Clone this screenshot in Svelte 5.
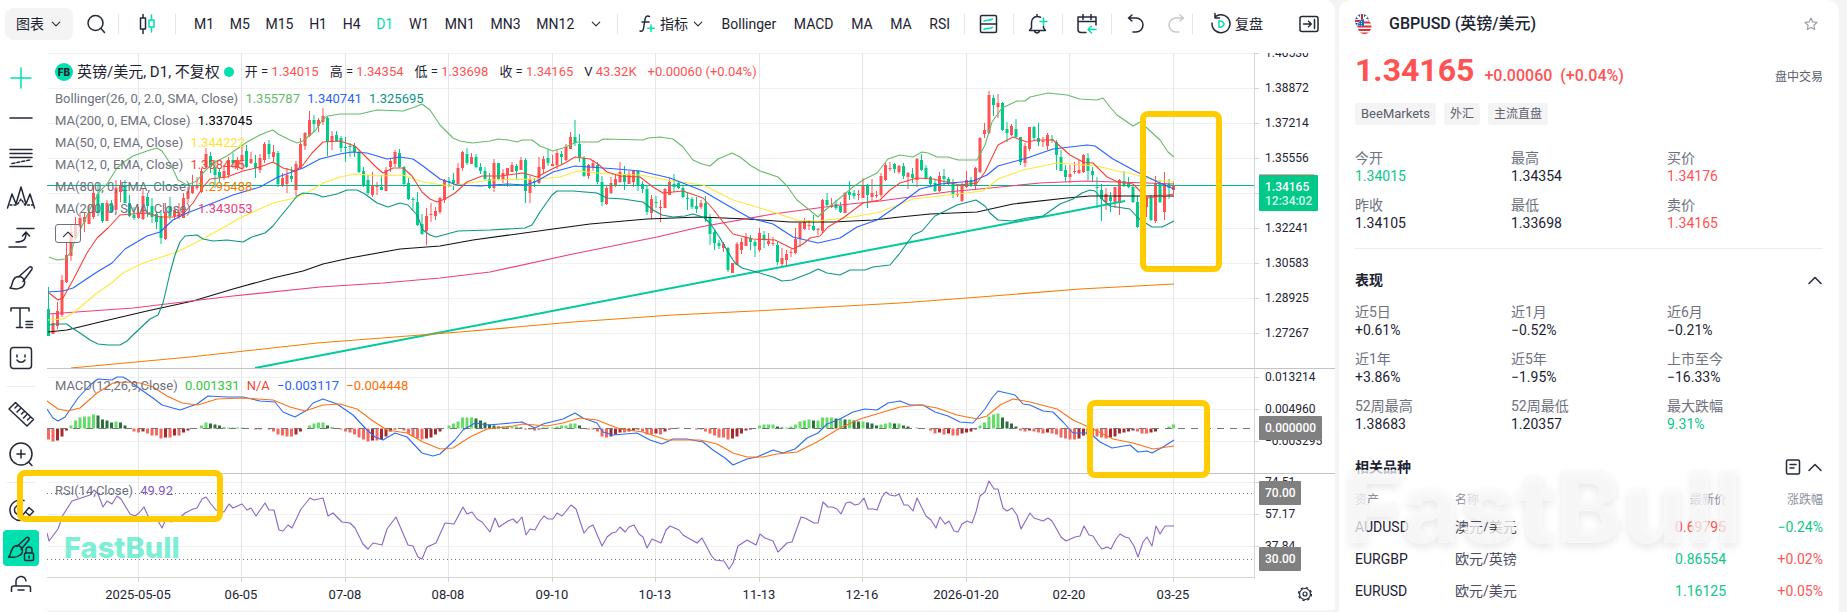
<script lang="ts">
  const intervals = ["M1", "M5", "M15", "H1", "H4", "D1", "W1", "MN1", "MN3", "MN12"];
  const studies = ["Bollinger", "MACD", "MA", "MA", "RSI"];

  const ohlc = [
    ["开", "1.34015"],
    ["高", "1.34354"],
    ["低", "1.33698"],
    ["收", "1.34165"]
  ];

  const legend = [
    { name: "MA(200, 0, EMA, Close)", value: "1.337045", tone: "black" },
    { name: "MA(50, 0, EMA, Close)", value: "1.344222", tone: "yellow" },
    { name: "MA(12, 0, EMA, Close)", value: "1.338445", tone: "red" },
    { name: "MA(800, 0, EMA, Close)", value: "1.295488", tone: "orange" },
    { name: "MA(200, 0, SMA, Close)", value: "1.343053", tone: "pink" }
  ];

  const quotes = [
    ["今开", "1.34015", "up"],
    ["最高", "1.34354", ""],
    ["买价", "1.34176", "down"],
    ["昨收", "1.34105", ""],
    ["最低", "1.33698", ""],
    ["卖价", "1.34165", "down"]
  ];

  const performance = [
    ["近5日", "+0.61%", ""],
    ["近1月", "−0.52%", ""],
    ["近6月", "−0.21%", ""],
    ["近1年", "+3.86%", ""],
    ["近5年", "−1.95%", ""],
    ["上市至今", "−16.33%", ""],
    ["52周最高", "1.38683", ""],
    ["52周最低", "1.20357", ""],
    ["最大跌幅", "9.31%", "up"]
  ];

  const related = [
    { code: "AUDUSD", name: "澳元/美元", price: "0.69795", priceTone: "down", change: "−0.24%", changeTone: "up" },
    { code: "EURGBP", name: "欧元/英镑", price: "0.86554", priceTone: "up", change: "+0.02%", changeTone: "down" },
    { code: "EURUSD", name: "欧元/美元", price: "1.16125", priceTone: "up", change: "+0.05%", changeTone: "down" }
  ];

  const xLabels: [number, string][] = [
    [138, "2025-05-05"], [241, "06-05"], [345, "07-08"], [448, "08-08"], [552, "09-10"], [655, "10-13"],
    [759, "11-13"], [862, "12-16"], [966, "2026-01-20"], [1069, "02-20"], [1173, "03-25"]
  ];

  const yLabels: [number, string][] = [
    [53, "1.40530"], [88, "1.38872"], [123, "1.37214"], [158, "1.35556"], [193, ""], [228, "1.32241"],
    [263, "1.30583"], [298, "1.28925"], [333, "1.27267"], [377, "0.013214"], [409, "0.004960"],
    [441, "−0.003295"], [482, "74.51"], [514, "57.17"], [546, "37.84"]
  ];

  // colour, then high, body top, body bottom, low
  const candleData = `
    g287,309,336,336 r313,323,334,334 r302,311,326,329 r275,280,315,317 r243,255,282,283 r225,232,256,261 r217,225,238,240
    r213,218,228,232 r212,217,222,232 r205,213,224,224 r186,193,217,219 g183,194,213,216 g203,203,221,223 r200,203,221,221
    g200,203,212,212 r180,188,210,213 r180,186,192,202 g180,187,203,203 g195,203,216,217 g207,215,218,220 r207,213,218,219
    r188,196,219,220 g193,197,206,217 g198,206,217,223 g211,214,222,229 g212,216,238,244 r203,212,239,240 g197,206,216,220
    r209,210,216,220 r203,212,217,219 r193,198,218,218 r187,191,199,203 r175,186,193,194 r177,186,188,190 r168,171,192,193
    r148,154,167,168 g152,156,167,173 g160,167,175,188 g168,172,177,182 r165,171,177,180 r157,160,175,178 g153,160,163,168
    r157,160,168,170 r145,155,160,170 g145,151,167,168 r152,159,163,164 g155,163,168,178 r154,158,170,173 r142,144,160,163
    g140,144,154,159 r145,152,157,162 g151,153,184,187 r173,178,185,187 r168,175,184,193 g167,176,179,182 r161,164,190,196
    r138,144,168,169 r132,133,146,150 r111,120,136,137 g115,120,124,132 r118,120,126,132 r108,116,122,125 g117,118,142,156
    r131,136,142,150 g131,135,141,142 g136,138,148,152 g137,147,148,162 g143,146,147,157 g143,146,152,157 g151,152,172,173
    g167,171,186,187 g175,180,193,195 r172,185,195,197 r182,186,187,195 g175,187,190,190 r167,170,191,191 r158,161,167,172
    r150,152,164,167 g149,153,167,168 g166,167,184,187 g178,183,199,200 g197,199,200,210 g192,202,225,226 g214,224,234,235
    r208,216,231,245 r203,214,215,222 r207,211,216,220 r197,198,212,214 r179,180,200,203 g177,181,182,187 g173,180,183,190
    r163,168,185,185 r151,152,168,171 g148,154,163,165 r153,157,164,164 g154,157,167,168 g163,167,171,174 g167,171,179,180
    g173,179,188,189 r159,163,188,192 g163,163,179,180 r169,173,180,183 r168,168,175,187 r162,165,172,172 g164,166,171,179
    r157,160,170,170 g158,160,191,203 r176,179,193,203 g178,181,182,187 r157,167,183,184 r156,159,169,173 g149,158,163,166
    r155,164,166,166 r150,153,165,169 g151,154,157,165 r144,147,160,161 r132,137,149,149 g120,137,143,146 g134,144,158,162
    g156,158,176,177 r164,165,176,179 r160,163,167,171 g162,165,182,184 g176,182,202,206 r186,188,204,205 r177,183,193,194
    r175,179,185,187 r162,172,182,183 g166,174,182,190 r171,174,184,184 r170,171,182,187 g171,171,185,191 g181,184,189,193
    g186,189,212,215 r195,199,213,219 g196,202,203,208 r200,207,208,222 r188,189,208,208 r178,182,195,195 g174,184,187,192
    g181,183,188,189 g186,188,197,198 g193,198,199,210 g197,199,207,209 g197,206,209,213 r200,203,207,209 g196,203,219,222
    g214,217,234,245 g230,232,243,250 g240,243,246,249 r242,244,248,252 g247,248,270,272 r263,263,273,273 r242,244,265,265
    r238,242,250,254 r233,237,246,246 g235,238,242,250 g240,242,246,257 r228,233,250,252 g231,235,240,248 r233,241,244,246
    r237,243,244,246 g242,245,262,265 r248,258,264,266 r250,254,260,266 r249,252,253,257 r228,239,253,254 r222,223,239,247
    r218,222,229,230 r220,225,226,230 g215,226,230,231 r228,229,230,235 r199,200,231,233 g193,200,205,206 r198,205,207,208
    g200,204,208,210 g202,206,212,213 r192,193,213,213 g181,192,195,200 g190,193,196,199 r190,194,195,200 r178,185,198,198
    g184,186,195,208 r179,193,197,201 r191,195,196,198 r173,176,195,197 r163,165,180,181 r162,168,169,171 g163,164,169,173
    r165,166,172,174 g163,166,176,179 r172,173,177,189 g168,174,178,183 r158,159,180,187 g154,160,170,171 g165,168,178,179
    g176,177,184,185 g180,183,191,192 r172,176,191,192 g169,176,179,185 g177,179,184,185 g179,182,194,198 r186,194,195,197
    r183,184,201,202 r171,180,187,188 g177,180,186,187 r167,168,185,189 r137,138,172,173 r123,130,134,138 r91,95,133,134
    g95,98,105,116 r94,103,107,118 g102,103,130,131 g122,129,133,142 r124,126,135,136 g119,129,137,138 g137,137,162,165
    r143,146,163,167 r127,127,149,151 g126,127,138,140 g123,138,142,146 r137,141,142,147 r133,135,146,150 g135,139,140,143
    g140,142,155,170 g150,157,171,171 g165,170,177,182 r165,174,177,183 r162,171,172,174 r160,170,173,174 r154,155,172,173
    g153,158,171,180 g167,171,175,182 g177,187,188,208 g184,190,199,221 r188,194,202,210 g192,197,201,212 r187,187,202,208
    r179,180,203,215 g171,181,186,187 g177,183,187,188 g186,187,202,203 g196,202,227,228 r198,205,217,219 r197,198,207,217
    g195,198,220,221 r176,183,221,223 g180,184,202,203 r172,184,212,220 g179,184,188,199 r182,186,190,194`;

  const macdBars = [
    -11, -13, -12, -8, -2, 3, 8, 11, 12, 12, 14, 13, 9, 8, 6, 7, 6, 3, 0, -3, -4, -3, -5, -7, -7, -10, -9, -9, -7, -7, -4, -2,
    0, 0, 3, 6, 5, 4, 3, 1, 1, 1, 1, 1, 0, 0, -1, -1, 0, -1, -3, -6, -7, -8, -8, -6, -3, 0, 3, 5, 6, 6, 3, 1, 0, -1, -3, -4,
    -6, -9, -11, -13, -12, -12, -11, -8, -3, -1, 0, -2, -5, -8, -10, -11, -10, -9, -6, -3, 0, 3, 5, 7, 11, 11, 11, 10, 8, 6,
    4, 3, 2, 2, 1, 2, 2, 1, -1, -1, -2, -1, 1, 1, 1, 2, 3, 3, 5, 5, 3, 0, -1, -1, -3, -8, -9, -8, -6, -4, -4, -3, -2, -1, -3,
    -6, -6, -5, -6, -3, -1, 0, 1, 0, 0, 0, -1, -1, -3, -5, -7, -9, -9, -11, -10, -8, -5, -2, -1, 0, 3, 4, 4, 4, 2, 1, 1, 2, 4,
    7, 8, 9, 8, 8, 11, 11, 11, 10, 10, 9, 9, 8, 7, 7, 6, 5, 3, 4, 5, 6, 5, 5, 3, 2, 0, 1, 0, 0, -2, -5, -4, -6, -5, -7, -7,
    -5, -4, -3, -1, 3, 6, 12, 14, 15, 11, 7, 5, 2, -2, -3, -2, -3, -4, -5, -4, -5, -6, -9, -10, -11, -11, -10, -7, -6, -7, -8,
    -9, -10, -9, -8, -5, -4, -3, -2, -3, -5, -5, -4, -3, 0, 0, 2, 4, 5
  ];

  const curves = [
    {
      color: "#f57c00",
      points: "71,368 190,357 317,343 460,332 573,322 673,315 773,310 900,303 980,297 1080,289 1174,284"
    },
    {
      color: "#111111",
      points: "48,332 67,330 100,322 147,311 193,301 233,289 273,278 303,271 323,264 350,258 400,249 440,246 473,240 553,229 590,224 647,219 700,217 747,219 790,222 833,222 873,220 900,217 930,214 977,212 1013,204 1067,198 1090,196 1174,196"
    },
    {
      color: "#ec407a",
      points: "48,314 133,308 233,296 320,287 383,283 440,278 490,272 573,254 657,237 700,227 773,214 840,205 880,201 947,192 990,188 1040,183 1087,181 1147,183 1174,184"
    },
    {
      color: "#ffe838",
      points: "48,320 63,319 73,313 97,293 110,284 123,273 143,263 177,252 197,242 217,231 233,222 240,218 273,203 295,198 307,193 323,183 340,177 355,174 380,176 403,175 423,182 450,186 470,183 490,180 537,179 560,177 578,171 607,174 640,175 673,181 703,185 733,200 773,212 797,220 818,221 853,217 880,212 913,199 957,194 983,191 998,179 1023,170 1057,163 1097,166 1117,171 1133,174 1153,180 1174,182"
    },
    {
      color: "#2962ff",
      points: "48,292 63,291 73,288 97,272 112,263 125,249 147,236 160,232 173,220 187,213 213,203 233,195 260,187 278,177 303,168 320,159 340,154 352,152 367,153 387,159 400,157 413,159 423,166 440,179 457,185 480,186 507,184 525,185 535,182 553,172 575,166 617,169 640,171 670,178 703,191 727,205 750,218 773,224 793,237 818,243 840,238 857,227 877,220 900,204 920,189 940,184 973,181 987,175 998,166 1027,158 1053,149 1087,145 1095,146 1113,159 1137,172 1160,183 1174,189"
    },
    {
      color: "#66bb6a",
      points: "49,257 57,260 65,259 71,252 75,240 84,222 93,203 100,191 107,184 117,168 124,162 133,156 147,151 157,148 162,151 170,163 178,180 187,185 197,181 203,173 213,163 227,156 247,142 260,135 267,132 273,130 278,134 290,140 297,143 303,141 315,131 323,119 328,116 340,114 360,114 377,110 403,111 415,107 422,104 430,110 440,125 453,138 460,141 472,143 490,141 498,139 508,140 517,142 522,140 532,140 540,146 553,151 563,148 577,142 598,142 603,139 643,140 648,138 660,137 673,139 683,147 693,160 702,164 710,166 718,159 732,153 740,157 750,165 760,171 778,177 787,186 797,200 807,208 818,217 823,212 840,198 853,187 863,180 877,173 888,159 900,155 913,157 922,152 928,153 937,157 948,157 958,160 977,160 985,145 992,122 1002,108 1017,101 1025,101 1030,97 1048,93 1067,95 1080,99 1097,100 1103,98 1110,107 1117,115 1133,126 1140,122 1147,128 1160,140 1168,152 1174,157"
    },
    {
      color: "#0b9585",
      points: "49,325 55,324 67,324 72,328 80,333 90,340 98,344 108,345 120,345 127,341 133,335 150,319 158,315 163,303 170,273 175,255 180,242 185,236 197,235 203,239 213,241 227,240 243,242 252,237 265,233 273,226 280,217 290,205 297,196 303,193 315,194 323,197 337,194 347,190 357,190 365,194 377,203 388,207 400,203 408,205 417,215 423,230 430,235 436,237 458,231 490,230 525,228 532,225 540,212 552,195 557,191 573,191 597,193 607,198 623,199 643,202 653,210 662,215 673,217 685,216 693,214 703,217 710,223 720,238 728,252 735,263 742,268 753,271 773,277 782,281 792,280 810,273 818,269 827,273 840,275 850,270 865,270 873,267 890,265 900,253 913,235 922,231 935,216 957,205 976,200 985,206 990,213 998,220 1013,221 1027,218 1043,216 1060,204 1073,199 1082,193 1090,190 1095,191 1103,200 1110,206 1130,209 1138,218 1152,227 1162,227 1174,221"
    },
    {
      color: "#f44336",
      points: "49,293 58,300 63,298 73,280 87,253 97,238 108,228 120,215 132,214 147,213 160,217 173,217 183,214 193,203 203,187 210,179 227,177 243,171 260,167 273,162 283,168 295,171 303,165 312,153 323,142 340,141 355,146 367,158 377,168 383,173 393,168 403,168 412,176 422,192 430,199 437,202 445,199 455,193 467,182 482,176 500,176 523,173 537,177 550,170 565,163 575,157 590,159 598,164 607,172 620,176 640,177 653,187 663,193 683,191 703,198 713,209 723,222 733,234 753,239 775,240 793,249 803,244 810,238 820,236 828,227 843,218 863,203 880,200 890,190 900,183 917,178 933,179 960,185 977,183 985,172 998,145 1013,137 1027,142 1037,140 1053,140 1070,155 1083,162 1093,163 1107,177 1118,182 1133,184 1147,198 1162,196 1174,194"
    },
    {
      color: "#2f6bf0",
      points: "47,409 53,418 58,421 65,417 78,398 90,385 98,379 112,380 117,377 123,377 128,380 143,391 153,398 162,405 180,410 197,404 208,396 227,397 243,397 260,401 275,402 283,412 295,417 307,410 313,403 323,399 337,404 353,415 367,430 375,437 383,440 395,433 407,437 422,453 433,456 440,454 455,440 463,430 475,423 488,425 500,424 522,422 535,428 543,424 563,419 575,413 583,418 597,423 603,432 613,435 637,433 650,440 662,444 673,439 687,439 703,442 713,450 725,458 733,465 747,459 757,457 773,450 783,453 795,449 807,438 818,433 827,424 840,419 853,412 865,409 877,410 888,403 900,401 910,405 923,405 935,412 948,416 960,422 973,423 985,409 992,398 998,391 1015,395 1023,404 1030,405 1043,411 1053,412 1063,422 1073,433 1090,433 1100,442 1112,448 1130,445 1138,452 1147,451 1152,453 1163,447 1174,440"
    },
    {
      color: "#ff7214",
      points: "47,401 58,409 68,411 80,408 97,393 113,383 125,382 140,383 153,387 167,396 182,403 198,405 217,399 243,398 273,400 290,407 305,411 323,405 340,404 357,409 373,421 387,430 407,433 423,442 440,449 453,448 470,437 487,429 513,426 523,424 547,426 563,423 580,418 597,420 607,424 620,429 643,432 667,440 700,440 717,444 733,453 747,457 763,457 777,454 797,452 817,442 840,428 860,419 880,413 900,407 920,405 937,408 957,415 977,419 987,416 1000,405 1013,399 1030,402 1057,409 1073,420 1093,429 1113,439 1133,443 1153,449 1174,446"
    }
  ];

  const rsi =
    "47,533 49,541 58,529 63,515 72,501 78,499 90,495 94,490 98,494 103,507 107,501 112,504 117,496 121,499 130,514 135,516 139,513 144,507 148,516 157,519 162,528 166,519 171,522 177,517 182,516 185,513 193,509 197,508 202,499 206,497 211,504 216,510 224,512 229,504 233,508 242,504 247,510 251,508 256,516 265,503 269,510 274,510 279,530 283,531 288,525 292,528 301,509 310,498 314,500 323,498 328,516 333,513 342,522 350,523 355,528 363,544 368,549 373,543 382,545 387,529 396,517 408,545 413,546 418,557 422,559 427,547 436,543 445,523 454,524 463,507 467,514 472,512 477,519 482,522 490,532 495,518 499,527 508,521 513,519 517,523 522,517 526,535 530,529 535,530 540,521 544,516 548,519 553,519 557,513 562,516 571,505 576,509 584,533 589,527 593,525 602,546 607,537 612,533 616,532 620,527 625,532 629,527 634,525 639,534 643,537 647,548 652,539 661,543 666,530 670,526 679,530 683,535 697,543 702,538 711,555 715,560 724,561 729,569 733,563 738,546 747,540 756,545 760,534 765,538 773,541 778,552 787,543 792,542 801,517 805,518 814,523 818,523 823,502 828,507 832,507 837,509 841,514 846,503 850,502 855,505 859,504 864,498 868,509 873,509 877,510 882,497 886,492 890,495 895,496 899,494 904,505 908,505 913,511 917,498 926,516 931,520 936,528 940,517 945,524 949,521 954,531 958,532 962,524 967,521 972,523 976,512 980,496 985,492 989,481 994,489 998,489 1003,508 1007,511 1012,508 1017,515 1021,529 1030,513 1034,518 1043,521 1048,518 1052,521 1061,537 1066,541 1075,537 1080,536 1084,526 1089,535 1093,536 1098,544 1102,549 1107,547 1111,549 1116,539 1120,534 1125,537 1129,538 1134,546 1138,557 1143,542 1147,537 1152,546 1156,526 1160,534 1165,526 1174,526";

  const barX = (i: number) => 48.5 + i * 4.5;

  const candles = candleData
    .trim()
    .split(/\s+/)
    .map((row, i) => {
      const [high, top, bottom, low] = row.slice(1).split(",").map(Number);
      return { x: barX(i), fill: row[0] === "r" ? "#ff5353" : "#00cb89", high, top, bottom, low };
    });

  const histogram = macdBars.slice(0, 251).map((v, i) => {
    const growing = Math.abs(v) >= Math.abs(macdBars[i - 1] ?? 0);
    const fill = v > 0 ? (growing ? "#66dd6b" : "#2f6f3e") : growing ? "#f56a60" : "#a52a30";
    return { x: barX(i), y: v > 0 ? 428.5 - v : 428.5, height: Math.abs(v), fill };
  });

  let activeInterval = $state("D1");
  let showLegend = $state(true);
  let showPerformance = $state(true);
  let showRelated = $state(true);
</script>

{#snippet chevron(up: boolean, size: number)}
  <svg class="icon" width={size} height={size} viewBox="0 0 16 16">
    <path d={up ? "M2 11.5 8 5.5l6 6" : "M3 5.5l5 5 5-5"} />
  </svg>
{/snippet}

<div class="page">
  <main class="workspace">
    <header class="toolbar">
      <button class="mode">图表 {@render chevron(false, 12)}</button>
      <button class="search" aria-label="搜索">
        <svg class="icon" width="20" height="22" viewBox="0 0 20 22">
          <circle cx="9.5" cy="10" r="7.5" /><path d="M15 15.5l3.500 4" />
        </svg>
      </button>
      <span class="rule"></span>
      <button class="candle" aria-label="K线类型">
        <svg class="icon" width="18" height="22" viewBox="0 0 18 22">
          <path d="M5 1.500V5M5 16v4.500M2.500 5h5v11h-5z" />
          <path class="mint" d="M13.500 2v5M13.500 14v5M11 7h5v7h-5z" />
        </svg>
      </button>
      <span class="rule"></span>
      <div class="texts intervals">
        {#each intervals as item}
          <button class:active={item === activeInterval} onclick={() => (activeInterval = item)}>{item}</button>
        {/each}
        <button class="more" aria-label="更多周期">{@render chevron(false, 12)}</button>
      </div>
      <span class="rule"></span>
      <div class="texts studies">
        <button class="indicator">
          <svg class="icon" width="18" height="20" viewBox="0 0 18 20">
            <path d="M11.500 2.500c-2.500-1-4 0-4.400 2.500L5.500 14.500c-.4 2.500-1.500 3-3.500 2.500M4 8h7" />
            <path class="mint" d="M13 11v6.500M9.800 14.300h6.500" />
          </svg>
          指标 {@render chevron(false, 12)}
        </button>
        {#each studies as item}
          <button>{item}</button>
        {/each}
      </div>
      <span class="rule"></span>
      <button class="tool" aria-label="模板">
        <svg class="icon" width="20" height="20" viewBox="0 0 20 20">
          <rect x="1.500" y="1.500" width="16" height="17" rx="1.500" /><path d="M1.500 10h16" />
          <path class="mint" d="M5 7.200c2-2.500 4 .5 8.500-2.200M5 15.500c2-2.500 4 .5 8.500-2.200" />
        </svg>
      </button>
      <span class="rule"></span>
      <button class="tool" aria-label="提醒">
        <svg class="icon" width="20" height="20" viewBox="0 0 20 20">
          <path d="M12.500 3.200C6.500 1 3.500 5 3.500 8.500V14L1.500 16.500h16L15.500 14v-2M9 .5v1.500M6.500 17c.5 2.500 4.500 2.500 5 0" />
          <path class="mint" d="M15.500 4v7M12 7.500h7" />
        </svg>
      </button>
      <span class="rule"></span>
      <button class="tool" aria-label="日历">
        <svg class="icon" width="20" height="20" viewBox="0 0 20 20">
          <path d="M9 18.500H4a3 3 0 0 1-3-3V3h18v8M1 7.500h18M6 .5v5M14 .5v5" />
          <path class="mint" d="M19 15.500h-8M14.500 12 11 15.500l3.500 3.500" />
        </svg>
      </button>
      <span class="rule"></span>
      <button class="tool" aria-label="撤销">
        <svg class="icon" width="18" height="20" viewBox="0 0 18 20">
          <path d="M5 1 1.500 4 5 7M1.500 4H9a7 7 0 0 1 0 14H6" />
        </svg>
      </button>
      <button class="redo" aria-label="重做" disabled>
        <svg class="icon" width="18" height="20" viewBox="0 0 18 20">
          <path d="M13 1l3.500 3L13 7M16.500 4H9a7 7 0 0 0 0 14h3" />
        </svg>
      </button>
      <span class="rule"></span>
      <button class="replay">
        <svg class="icon" width="20" height="20" viewBox="0 0 20 20">
          <path d="M4 3a9 9 0 1 1-3 6M4-.5V4h4.500" />
          <path class="mint" d="M8 6.800v6.500c3 0 5.500-2 5-3.500S10 7 8 6.800z" />
        </svg>
        复盘
      </button>
      <button class="panel-toggle" aria-label="收起面板">
        <svg class="icon" width="20" height="18" viewBox="0 0 20 18">
          <rect x="1" y="1.500" width="18" height="15" rx="2" /><path d="M4.500 9H12M9.500 6.200 12.300 9l-2.800 2.800M15.500 4.500v9" />
        </svg>
      </button>
    </header>

    <div class="body">
      <nav class="drawing" aria-label="画图工具">
        <button aria-label="十字光标">
          <svg class="icon mint" width="28" height="28" viewBox="0 0 28 28"><path d="M4 14h20M14 4v20" /></svg>
        </button>
        <button aria-label="直线">
          <svg class="icon" width="28" height="28" viewBox="0 0 28 28"><path d="M3 14h22" /></svg>
        </button>
        <button aria-label="斐波那契">
          <svg class="icon" width="28" height="28" viewBox="0 0 28 28">
            <path d="M3 5.500h22M3 9.500h22M3 13.500h22M3 22.500h22" /><path d="M5 19.500l18-3.500" stroke-dasharray="3 2" />
          </svg>
        </button>
        <button aria-label="形态">
          <svg class="icon" width="30" height="28" viewBox="0 0 30 28">
            <path d="M1.500 24 6 10l4 10L15 3l5 17 4-10 4.500 14" />
            <path d="M4 21h7l4-6 4 6h8" stroke-dasharray="2 2" />
          </svg>
        </button>
        <button aria-label="多空">
          <svg class="icon" width="28" height="28" viewBox="0 0 28 28">
            <path d="M10 4.500h17M2 23h17M9 18c7 0 10-2 10-9M15.500 12 19 8l3.500 4" />
          </svg>
        </button>
        <button aria-label="画笔">
          <svg class="icon" width="28" height="28" viewBox="0 0 28 28">
            <path d="M11.500 13 22 3.500c2-1.500 4 0 2.800 2L16 17.500M3 24c2.500-1 1.500-5 3.500-8a5.800 5.800 0 1 1 6.500 8c-3 2-6.500.5-10 0z" />
          </svg>
        </button>
        <button aria-label="文字">
          <svg class="icon" width="28" height="28" viewBox="0 0 28 28">
            <path d="M4 7V4h18v3M13 4v19M9.500 23.500h6M19 17.500h6.500M19 20.500h6.500M19 23.500h6.500" />
          </svg>
        </button>
        <button aria-label="表情">
          <svg class="icon" width="28" height="28" viewBox="0 0 28 28">
            <rect x="3.500" y="3.500" width="21" height="21" rx="3" />
            <path d="M10 11v2M18 11v2M10 16c2 3 6 3 8 0" />
          </svg>
        </button>
        <hr />
        <button aria-label="测量">
          <svg class="icon" width="28" height="28" viewBox="0 0 28 28">
            <path d="M2 9 8.500 2.500 26.500 19.500 20 26zM11 5l-3 3M14 8l-4 4M17.500 11l-3 3M20.500 14l-4 4M23.500 17l-3 3" />
          </svg>
        </button>
        <button aria-label="放大">
          <svg class="icon" width="28" height="28" viewBox="0 0 28 28">
            <circle cx="14" cy="14" r="11" /><path d="M10 14h8M14 10v8M21.500 22l3.500 3.500" />
          </svg>
        </button>
        <hr />
        <button aria-label="磁铁">
          <svg class="icon" width="28" height="28" viewBox="0 0 28 28">
            <path d="M17 4.500C8 2 2.500 9 3 15s5.500 9.500 10 9.500M14 10a4.500 4.500 0 1 0 0 8M15 20l7-8.500 4.500 4L18 24zM18.500 16l4 3.500" />
          </svg>
        </button>
        <button class="selected" aria-label="锁定绘图">
          <svg class="icon" width="28" height="28" viewBox="0 0 28 28">
            <path d="M10 12.500 19 4c2-1.500 4 0 2.800 2L14 15.500M1.500 23c2.500-1 1.500-5 3.500-7.500a5.300 5.300 0 1 1 6.500 6.500c-3 2-6.500 1.500-10 1z" />
            <rect x="17.500" y="19" width="9" height="7.500" rx="1" /><path d="M19 19v-3a3 3 0 0 1 6 0v3M22 22v2" />
          </svg>
        </button>
        <button class="cut" aria-label="解锁">
          <svg class="icon" width="28" height="28" viewBox="0 0 28 28">
            <path d="M9 12V8a5 5 0 0 1 10-1M4.500 22v-8a2 2 0 0 1 2-2h15a2 2 0 0 1 2 2v8M11 16h6" />
          </svg>
        </button>
      </nav>

      <section class="chart" aria-label="GBPUSD D1">
        <svg class="plot" viewBox="47 53 1288 557">
          <g class="grid">
            {#each yLabels as [y]}
              <path d="M47 {y + 0.5}H1254" />
            {/each}
            {#each xLabels as [x]}
              <path class="vertical" d="M{x + 0.5} 53V577" />
            {/each}
          </g>

          <g>
            {#each candles as c}
              <rect x={c.x - 0.5} y={c.high} width="1" height={c.low - c.high} fill={c.fill} />
              <rect x={c.x - 1.5} y={c.top} width="3" height={Math.max(c.bottom - c.top, 1)} fill={c.fill} />
            {/each}
          </g>
          <path class="price" d="M47 185.500H1254" />
          <path class="trend" d="M255 368 1125 201" />

          {#each histogram as bar}
            <rect x={bar.x - 1.5} y={bar.y} width="3" height={bar.height} fill={bar.fill} />
          {/each}
          <path class="zero" d="M47 428.500H1254" />
          {#each curves as curve}
            <polyline class="curve" points={curve.points} stroke={curve.color} />
          {/each}
          <path class="level" d="M47 493.500H1254M47 559.500H1254" />
          <polyline class="curve" points={rsi} stroke="#8c66c8" />

          <path class="frame" d="M47 368.500H1335M47 473.500H1335" />
          <path class="axis" d="M47 577.500H1254M1254.500 53V579" />
          {#each xLabels as [x, label]}
            <path class="axis" d="M{x + 0.5} 577v5" />
            <text class="date" x={x} y="599">{label}</text>
          {/each}
          {#each yLabels as [y, label]}
            <path class="axis" d="M1254 {y + 0.5}h5" />
            <text x="1265" y={y + 4}>{label}</text>
          {/each}

          <rect x="1259" y="174" width="55" height="2" fill="#ff9c9c" />
          <rect x="1259" y="175" width="59" height="36" rx="1" fill="#00c989" />
          <text class="on" x="1265" y="191">1.34165</text>
          <text class="on light" x="1265" y="205">12:34:02</text>
          <rect class="tag" x="1259" y="416" width="63" height="24" rx="1" />
          <text class="on" x="1265" y="432">0.000000</text>
          <rect class="tag" x="1259" y="481" width="42" height="24" rx="1" />
          <text class="on" x="1265" y="497">70.00</text>
          <rect class="tag" x="1259" y="547" width="42" height="24" rx="1" />
          <text class="on" x="1265" y="563">30.00</text>

          <text class="brand" x="64" y="558">FastBull</text>
          <g class="gear">
            <circle cx="1305" cy="594" r="5.500" /><circle cx="1305" cy="594" r="2" />
            <circle class="teeth" cx="1305" cy="594" r="6.500" />
          </g>
        </svg>

        <div class="legend">
          <div class="symbol">
            <span class="logo">FB</span>
            <span class="pair">英镑/美元, D1, 不复权</span>
            <span class="dot"></span>
            {#each ohlc as [label, value]}
              <span class="field">{label} = <b>{value}</b></span>
            {/each}
            <span class="field">V <b>43.32K</b></span>
            <b>+0.00060 (+0.04%)</b>
          </div>
          {#if showLegend}
            <div class="study">
              Bollinger(26, 0, 2.0, SMA, Close)
              <span class="band">1.355787</span>
              <span class="blue">1.340741</span>
              <span class="teal">1.325695</span>
            </div>
            {#each legend as item}
              <div class="study">{item.name} <span class={item.tone}>{item.value}</span></div>
            {/each}
          {/if}
          <button class="collapse" aria-label="收起指标" onclick={() => (showLegend = !showLegend)}>
            {@render chevron(showLegend, 12)}
          </button>
        </div>
        <div class="legend macd">
          <div class="study">
            MACD(12,26,9,Close)
            <span class="lime">0.001331</span>
            <span class="red">N/A</span>
            <span class="blue">−0.003117</span>
            <span class="signal">−0.004448</span>
          </div>
        </div>
        <div class="legend rsi">
          <div class="study">RSI(14,Close) <span class="purple">49.92</span></div>
        </div>

        <span class="mark mark-price"></span>
        <span class="mark mark-macd"></span>
        <span class="mark mark-rsi"></span>
      </section>
    </div>
  </main>

  <aside class="panel">
    <header class="title">
      <svg width="17" height="20" viewBox="0 0 17 20">
        <defs>
          <clipPath id="uk"><ellipse cx="7" cy="7" rx="7" ry="7" /></clipPath>
          <clipPath id="us"><ellipse cx="9.500" cy="12.500" rx="7" ry="7.500" /></clipPath>
        </defs>
        <g clip-path="url(#uk)">
          <rect width="17" height="20" fill="#1b4fa3" />
          <path d="M0 0l14 14M14 0 0 14" stroke="#fff" stroke-width="2.500" />
          <path d="M7 0v14M0 7h14" stroke="#fff" stroke-width="4" />
          <path d="M7 0v14M0 7h14" stroke="#d8232f" stroke-width="2" />
        </g>
        <g clip-path="url(#us)">
          <rect width="17" height="20" fill="#fff" />
          <path d="M0 8.500h17M0 12.500h17M0 16h17M0 19.500h17" stroke="#e0303a" stroke-width="1.800" />
          <rect width="9" height="12" fill="#1b6fc4" />
          <path d="M4 7v5M6.500 7v5" stroke="#b9d6f2" stroke-dasharray="1 1" />
        </g>
      </svg>
      <h1>GBPUSD (英镑/美元)</h1>
      <button aria-label="收藏">
        <svg class="star" width="14" height="14" viewBox="0 0 14 14">
          <path d="M7 1l1.800 3.900 4.200.5-3.100 2.900.8 4.200L7 10.400l-3.700 2.100.8-4.200L1 5.400l4.200-.5z" />
        </svg>
      </button>
    </header>

    <div class="last down">
      <strong>1.34165</strong>
      <span>+0.00060</span>
      <span>(+0.04%)</span>
      <small>盘中交易</small>
    </div>

    <div class="tags">
      <a href="#broker">BeeMarkets</a>
      <a href="#forex">外汇</a>
      <a href="#majors">主流直盘</a>
    </div>

    <dl class="stats">
      {#each quotes as [label, value, tone]}
        <div><dt>{label}</dt><dd class={tone}>{value}</dd></div>
      {/each}
    </dl>
    <hr />

    <div class="heading">
      <h2>表现</h2>
      <button aria-label="折叠表现" onclick={() => (showPerformance = !showPerformance)}>{@render chevron(showPerformance, 16)}</button>
    </div>
    {#if showPerformance}
      <dl class="stats">
        {#each performance as [label, value, tone]}
          <div><dt>{label}</dt><dd class={tone}>{value}</dd></div>
        {/each}
      </dl>
    {/if}

    <div class="heading related-heading">
      <h2>相关品种</h2>
      <button aria-label="列表">
        <svg class="icon" width="16" height="16" viewBox="0 0 16 16">
          <rect x="1.500" y="1" width="13" height="14" rx="1.500" /><path d="M5 5.500h6M5 9h4" />
        </svg>
      </button>
      <button aria-label="折叠相关品种" onclick={() => (showRelated = !showRelated)}>{@render chevron(showRelated, 16)}</button>
    </div>
    {#if showRelated}
      <div class="related">
        <table>
          <thead>
            <tr><th>资产</th><th>名称</th><th class="num">最新价</th><th class="num">涨跌幅</th></tr>
          </thead>
          <tbody>
            {#each related as row}
              <tr>
                <td>{row.code}</td>
                <td class="name">{row.name}</td>
                <td class="num {row.priceTone}">{row.price}</td>
                <td class="num {row.changeTone}">{row.change}</td>
              </tr>
            {/each}
          </tbody>
        </table>
        <span class="watermark">FastBull</span>
      </div>
    {/if}
  </aside>
</div>

<style>
  :global(body) {
    background: #f4f4f4;
  }

  .page {
    display: flex;
    align-items: stretch;
    gap: 4px;
    min-height: 100vh;
    padding-right: 8px;
    box-sizing: border-box;
    overflow: hidden;
    font: 14px/20px Roboto, "Noto Sans CJK SC", sans-serif;
    color: #1d2333;
  }

  button {
    display: flex;
    align-items: center;
    justify-content: center;
    padding: 0;
    border: 0;
    background: none;
    font: inherit;
    color: inherit;
    white-space: nowrap;
    cursor: pointer;
  }

  .icon {
    flex: none;
    fill: none;
    stroke: #23293a;
    stroke-width: 1.5;
    stroke-linecap: round;
    stroke-linejoin: round;
    overflow: visible;
  }
  .mint {
    stroke: #00e0b0;
  }

  .workspace {
    flex: 1;
    min-width: 0;
    background: #fff;
    border-radius: 0 10px 0 0;
  }

  .toolbar {
    display: flex;
    align-items: center;
    height: 53px;
    padding: 0 16px 5px 5px;
    box-sizing: border-box;
  }
  .rule {
    width: 1px;
    height: 20px;
    background: #e6e6e6;
  }
  .mode {
    gap: 6px;
    width: 68px;
    height: 32px;
    border-radius: 8px;
    background: #f4f4f4;
  }
  .search {
    width: 45px;
  }
  .candle {
    width: 56px;
  }
  .texts {
    display: flex;
    align-items: center;
    justify-content: space-between;
    flex: 1;
  }
  .intervals {
    max-width: 408px;
    margin: 0 15px 0 18px;
  }
  .active {
    color: #00e0b0;
  }
  .studies {
    max-width: 312px;
    margin: 0 14px 0 20px;
  }
  .indicator,
  .replay {
    gap: 4px;
  }
  .tool {
    width: 48px;
  }
  .redo {
    width: 32px;
    opacity: 0.25;
  }
  .replay {
    margin-left: 18px;
  }
  .panel-toggle {
    margin-left: auto;
  }

  .body {
    display: flex;
  }

  .drawing {
    flex: none;
    width: 47px;
    padding-top: 5px;
    box-sizing: border-box;
  }
  .drawing button {
    width: 42px;
    height: 40px;
  }
  .drawing hr {
    width: 28px;
    height: 1px;
    margin: 8px 7px 7px;
    border: 0;
    background: #ececec;
  }
  .drawing .selected {
    width: 36px;
    height: 36px;
    margin: 0 3px;
    border-radius: 4px;
    background: #00dfae;
  }
  .drawing .cut {
    height: 26px;
    align-items: flex-start;
    padding-top: 8px;
    box-sizing: border-box;
    overflow: hidden;
  }

  .chart {
    position: relative;
    flex: 1;
    min-width: 0;
    border-bottom: 2px solid #f4f4f4;
  }
  .plot {
    display: block;
    width: 100%;
    height: auto;
  }
  .grid path {
    stroke: #f1f1f1;
  }
  .grid .vertical {
    stroke: #e6e6e6;
  }
  .price {
    stroke: #00b886;
  }
  .trend {
    stroke: #00cb9c;
    stroke-width: 2;
  }
  .zero {
    stroke: #777;
    stroke-dasharray: 7 6;
  }
  .level {
    stroke: #777;
    stroke-dasharray: 1 3;
  }
  .curve {
    fill: none;
    stroke-width: 1.1;
    stroke-linejoin: round;
  }
  .frame {
    stroke: #c3c3c8;
  }
  .axis {
    stroke: #d4d4d4;
  }
  .plot text {
    font-size: 12px;
    fill: #1d2333;
  }
  .plot .date {
    font-size: 13px;
    text-anchor: middle;
  }
  .tag {
    fill: #808080;
  }
  .plot .on {
    fill: #fff;
    font-weight: 500;
  }
  .plot .light {
    fill: #d2f7ea;
  }
  .plot .brand {
    font: 800 29px Inter, sans-serif;
    fill: #00e1b0;
    opacity: 0.5;
  }
  .gear {
    fill: none;
    stroke: #23293a;
    stroke-width: 1.2;
  }
  .teeth {
    stroke-dasharray: 2.5 2.6;
  }

  .legend {
    position: absolute;
    left: 8px;
    top: 8px;
    font-size: 13px;
    line-height: 22px;
    color: #6e7180;
    white-space: nowrap;
  }
  .macd {
    top: 322px;
  }
  .rsi {
    top: 427px;
  }
  .symbol {
    display: flex;
    align-items: center;
    gap: 11px;
    margin-bottom: 5px;
    color: #1d2333;
  }
  .symbol b {
    font-weight: 400;
    color: #ff5353;
  }
  .logo {
    width: 18px;
    height: 18px;
    border-radius: 50%;
    background: #00dfae;
    font: 800 10px/18px Inter, sans-serif;
    text-align: center;
  }
  .pair {
    margin: 0 -7px;
    font-size: 15px;
  }
  .dot {
    width: 10px;
    height: 10px;
    border-radius: 50%;
    background: #00dfae;
  }
  .study span {
    margin-left: 4px;
  }
  .black { color: #000; }
  .yellow { color: #ffe22e; }
  .red { color: #f44336; }
  .orange { color: #f57c00; }
  .pink { color: #ec407a; }
  .band { color: #66bb6a; }
  .blue { color: #2962ff; }
  .teal { color: #0b9585; }
  .lime { color: #32c83c; }
  .signal { color: #ff6d00; }
  .purple { color: #7e57c2; }

  .collapse {
    width: 26px;
    height: 19px;
    margin-top: 4px;
    border: 1px solid #6e7180;
    border-radius: 3px;
    background: rgba(255, 255, 255, 0.7);
  }

  /* highlight frames drawn over the chart */
  .mark {
    position: absolute;
    box-sizing: border-box;
    border: 6px solid #ffcc00;
    border-radius: 8px;
    pointer-events: none;
  }
  .mark-price {
    right: 113px;
    top: 58px;
    width: 82px;
    height: 161px;
  }
  .mark-macd {
    right: 125px;
    top: 347px;
    width: 123px;
    height: 78px;
  }
  .mark-rsi {
    left: -30px;
    top: 417px;
    width: 206px;
    height: 52px;
  }

  .panel {
    flex: none;
    width: 500px;
    padding: 0 16px;
    box-sizing: border-box;
    border-radius: 12px 12px 0 0;
    background: #fff;
  }
  .title {
    display: flex;
    align-items: center;
    height: 48px;
  }
  h1 {
    flex: 1;
    margin: 0 0 0 17px;
    font-size: 16px;
    font-weight: 500;
  }
  .title button {
    width: 24px;
    height: 24px;
  }
  .star {
    fill: none;
    stroke: #9a9daa;
    stroke-width: 1.2;
    stroke-linejoin: round;
  }
  .up {
    color: #0bc886;
  }
  .down {
    color: #ff5353;
  }

  .last {
    display: flex;
    align-items: baseline;
    gap: 8px;
    font-size: 16px;
    font-weight: 500;
  }
  .last strong {
    margin-right: 2px;
    font-size: 32px;
    line-height: 44px;
    font-weight: 700;
  }
  .last small {
    margin-left: auto;
    font-size: 12px;
    font-weight: 400;
    color: #5b5f6e;
  }

  .tags {
    display: flex;
    gap: 8px;
    margin-top: 11px;
  }
  .tags a {
    padding: 0 6px;
    border-radius: 3px;
    background: #f4f4f4;
    font-size: 12px;
    line-height: 22px;
    color: #5b5f6e;
    text-decoration: none;
  }
  .tags a:first-child {
    font-size: 13px;
  }

  .stats {
    display: grid;
    grid-template-columns: repeat(3, 1fr);
    row-gap: 10px;
    margin: 24px 0 0;
    line-height: 18px;
  }
  .stats div {
    min-height: 37px;
  }
  dt {
    color: #6e7180;
  }
  dd {
    margin: 0;
  }
  .panel hr {
    height: 1px;
    margin: 15px 0 0;
    border: 0;
    background: #ececec;
  }
  .heading {
    display: flex;
    align-items: center;
    gap: 6px;
    height: 24px;
    margin-top: 19px;
  }
  .heading + .stats {
    margin-top: 11px;
  }
  .related-heading {
    margin-top: 21px;
  }
  h2 {
    flex: 1;
    margin: 0;
    font-size: 14px;
    font-weight: 700;
  }

  .related {
    position: relative;
    margin-top: 10px;
  }
  table {
    width: 100%;
    table-layout: fixed;
    border-collapse: collapse;
  }
  th,
  td {
    height: 32px;
    padding: 0;
    text-align: left;
    font-weight: 400;
  }
  th {
    height: 22px;
    font-size: 12px;
    color: #8d90a0;
  }
  th:nth-child(1) {
    width: 100px;
  }
  th:nth-child(4) {
    width: 97px;
  }
  .name {
    color: #4a4e5e;
  }
  .num {
    text-align: right;
  }
  .watermark {
    position: absolute;
    left: -11px;
    top: -32px;
    font: 800 100px/100px Inter, sans-serif;
    color: rgba(250, 250, 250, 0.75);
    text-shadow: 0 4px 8px rgba(0, 0, 0, 0.09);
    pointer-events: none;
  }
</style>
